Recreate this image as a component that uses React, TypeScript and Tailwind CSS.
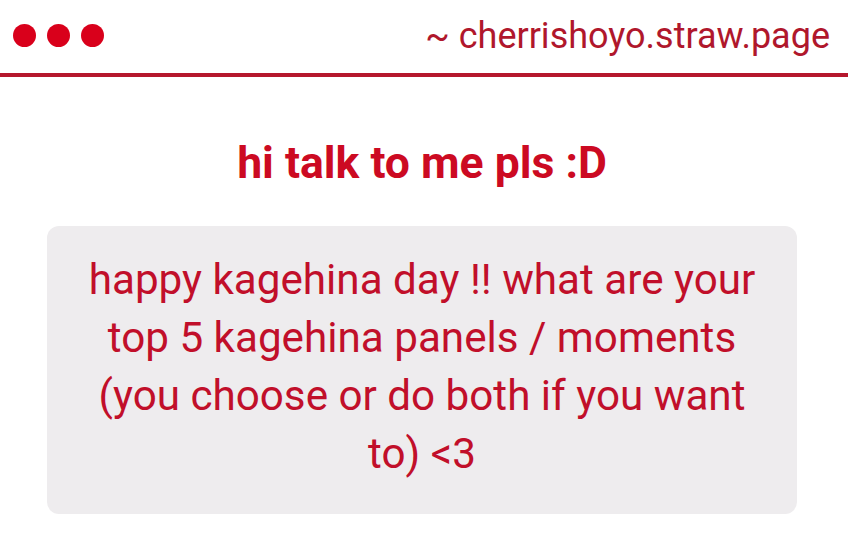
export default function App() {
  return (
    <div className="min-h-[557px] w-[848px] bg-white font-['Roboto',sans-serif]">
      <header className="flex h-[73px] items-center justify-between pl-[13px] pr-[18px] pb-[2px]">
        <div className="flex gap-[11px]">
          <span className="h-[23px] w-[23px] rounded-full bg-[#d9001b]"></span>
          <span className="h-[23px] w-[23px] rounded-full bg-[#d9001b]"></span>
          <span className="h-[23px] w-[23px] rounded-full bg-[#d9001b]"></span>
        </div>
        <div className="text-[36px] leading-none text-[#b0172c]">~ cherrishoyo.straw.page</div>
      </header>
      <div className="h-[4px] bg-[#b5172d]"></div>
      <main className="ml-[47px] w-[750px] pt-[60px]">
        <h1 className="text-center text-[44.5px] font-bold leading-[52px] text-[#cc0a22]">hi talk to me pls :D</h1>
        <div className="mt-[37px] rounded-[12px] bg-[#eeecee] px-8 pt-[25px] pb-[31px] text-center text-[42.2px] leading-[58px] text-[#c10f2a]">
          happy kagehina day !! what are your top 5 kagehina panels / moments (you choose or do both if you want to) &lt;3
        </div>
      </main>
    </div>
  );
}
